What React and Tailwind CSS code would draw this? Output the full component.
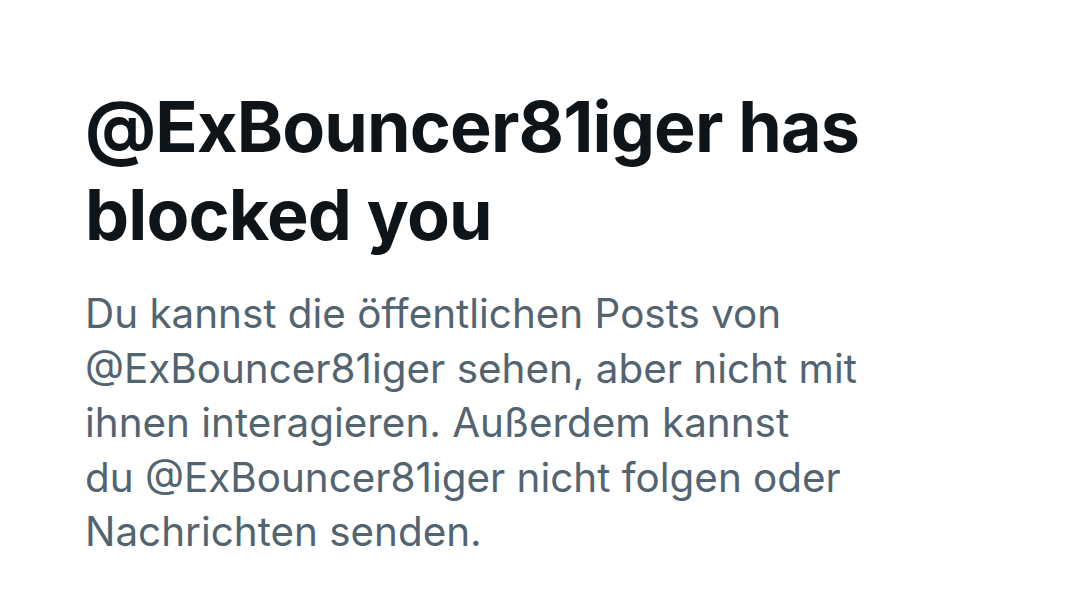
export default function App() {
  return (
    <div className="min-h-screen w-full bg-white" style={{ fontFamily: 'Inter, "Noto Sans", sans-serif' }}>
      <div className="pl-[85px] pt-[83px]">
        <h1 className="text-[70px] leading-[88px] font-bold text-[#0f1419] tracking-[-0.85px]">
          @ExBouncer81iger has
          <br />
          blocked you
        </h1>
        <p className="mt-[28px] text-[40.4px] leading-[54.6px] text-[#536471]">
          Du kannst die öffentlichen Posts von
          <br />
          @ExBouncer81iger sehen, aber nicht mit
          <br />
          ihnen interagieren. Außerdem kannst
          <br />
          du @ExBouncer81iger nicht folgen oder
          <br />
          Nachrichten senden.
        </p>
      </div>
    </div>
  );
}
